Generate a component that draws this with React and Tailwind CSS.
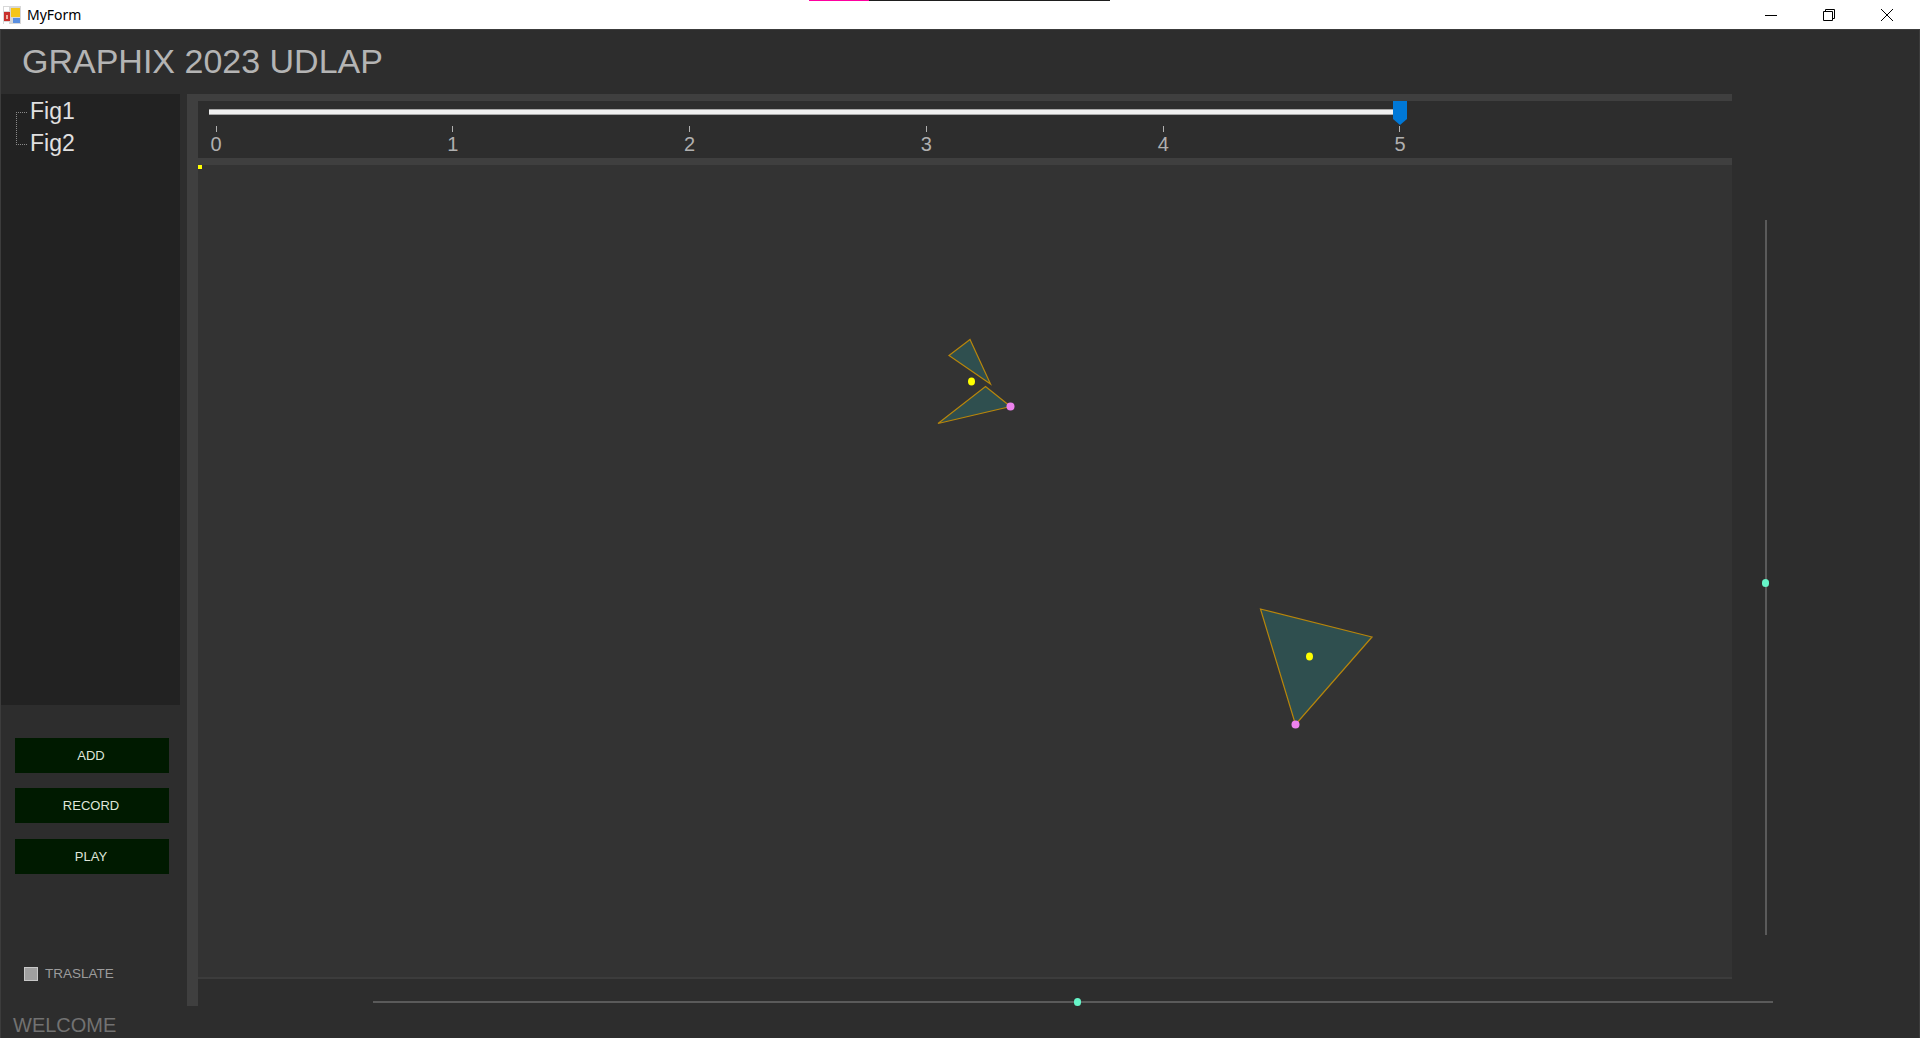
const TICKS = [0, 1, 2, 3, 4, 5];
const BUTTONS = [
  { label: "ADD", mt: "mt-[33px]" },
  { label: "RECORD", mt: "mt-[15px]" },
  { label: "PLAY", mt: "mt-[16px]" },
];
const FIGURES = [
  { points: "970,339.5 949,355.5 990.5,384", center: null, handle: null },
  { points: "985.5,386.5 1010.5,406.5 938,423.5", center: [971.5, 381.5], handle: [1010.5, 406.5] },
  { points: "1260.5,609 1372,637 1295.5,724.5", center: [1309.5, 656.5], handle: [1295.5, 724.5] },
];

function AppIcon() {
  return (
    <svg width="18" height="18" viewBox="0 0 18 18">
      <rect x="0" y="0" width="18" height="18" fill="#d8d8d8" />
      <rect x="1" y="6" width="6" height="9" fill="#c8302c" />
      <rect x="3" y="9" width="2" height="4" fill="#f0b0a0" />
      <rect x="8" y="2" width="9" height="9" fill="#f5c518" />
      <rect x="10" y="12" width="7" height="5" fill="#5a8fe0" />
      <rect x="1" y="1" width="5" height="4" fill="#ffffff" />
      <rect x="1" y="16" width="5" height="2" fill="#ffffff" />
    </svg>
  );
}

function WindowControls() {
  return (
    <div className="ml-auto flex items-center mr-[4px]">
      <div className="w-[58px] h-[29px] flex items-center justify-center">
        <svg width="12" height="12" viewBox="0 0 12 12">
          <path d="M0 6.5H12" stroke="#000" strokeWidth="1" />
        </svg>
      </div>
      <div className="w-[58px] h-[29px] flex items-center justify-center">
        <svg width="12" height="12" viewBox="0 0 12 12">
          <path d="M0.5 2.5H9.5V11.5H0.5Z M2.5 2.5V0.5H11.5V9.5H9.5" stroke="#000" fill="none" strokeWidth="1" />
        </svg>
      </div>
      <div className="w-[58px] h-[29px] flex items-center justify-center">
        <svg width="12" height="12" viewBox="0 0 12 12">
          <path d="M0 0L12 12M12 0L0 12" stroke="#000" fill="none" strokeWidth="1" />
        </svg>
      </div>
    </div>
  );
}

function Tree() {
  return (
    <div className="relative w-[179px] h-[611px] bg-[#222222] pt-[1px] pl-[29px] text-[23px] text-[#e0e0e0]">
      <div className="absolute left-[15px] top-[18px] w-[11px] h-[33px] border-l border-t border-b border-dotted border-[#8a8a8a]" />
      <div className="h-[32px] leading-[32px]">Fig1</div>
      <div className="h-[32px] leading-[32px]">Fig2</div>
    </div>
  );
}

function Sidebar() {
  return (
    <div className="w-[186px] flex flex-col">
      <Tree />
      {BUTTONS.map((b) => (
        <button
          key={b.label}
          className={`${b.mt} ml-[14px] w-[154px] h-[35px] bg-[#001a00] pr-[2px] text-[13px] text-[#dfe6da] flex items-center justify-center`}
        >
          {b.label}
        </button>
      ))}
      <div className="mt-[93px] ml-[23px] flex items-center gap-[7px]">
        <div className="w-[14px] h-[14px] bg-[#a0a0a0] border border-[#c8c8c8]" />
        <span className="text-[13.5px] leading-[14px] text-[#9c9c9c]">TRASLATE</span>
      </div>
      <div className="mt-[32px] ml-[12px] text-[20px] leading-[24px] text-[#727272]">WELCOME</div>
    </div>
  );
}

function TimeSlider() {
  return (
    <div className="ml-[2px] h-[57px] pl-[9px]">
      <div className="w-[1198px]">
        <div className="flex items-start h-[24px]">
          <div className="flex-1 h-[6px] mt-[8px] bg-[#f0f0f0] border-y border-[#a8a8a8]" />
          <svg width="14" height="24" viewBox="0 0 14 24">
            <path d="M0 0H14V18L7 24L0 18Z" fill="#0078d7" />
          </svg>
        </div>
        <div className="mt-[1px] flex justify-between">
          {TICKS.map((t) => (
            <div key={t} className="w-[14px] flex flex-col items-center">
              <div className="w-px h-[6px] bg-[#b0b0b0]" />
              <span className="mt-[1px] text-[20px] leading-[22px] text-[#b0b0b0]">{t}</span>
            </div>
          ))}
        </div>
      </div>
    </div>
  );
}

function Canvas() {
  return (
    <div className="h-[812px] bg-[#333333]">
      <svg className="block w-full h-full" viewBox="198 165 1534 812">
        <rect x="198" y="165" width="4" height="4" fill="#ffff00" />
        {FIGURES.map((f) => (
          <g key={f.points}>
            <polygon points={f.points} fill="#2f4f4f" stroke="#b8860b" strokeWidth="1.2" />
            {f.center && <ellipse cx={f.center[0]} cy={f.center[1]} rx="3.5" ry="4" fill="#ffff00" />}
            {f.handle && <circle cx={f.handle[0]} cy={f.handle[1]} r="4" fill="#ee82ee" />}
          </g>
        ))}
      </svg>
    </div>
  );
}

export default function App() {
  return (
    <div className="w-[1920px] h-[1038px] flex flex-col overflow-hidden font-['Liberation_Sans',Arial,sans-serif]">
      <div className="relative h-[29px] bg-white flex items-center pl-[3px] shrink-0">
        <div className="absolute top-0 left-[809px] w-[60px] h-px bg-[#ff00a0]" />
        <div className="absolute top-0 left-[869px] w-[241px] h-px bg-[#1e1e1e]" />
        <AppIcon />
        <span className="ml-[6px] text-[14px] text-black font-['Noto_Sans',sans-serif]">MyForm</span>
        <WindowControls />
      </div>
      <div className="flex-1 flex flex-col bg-[#2d2d2d] border-t border-x border-[#3c3c3c]">
        <div className="h-[64px] flex items-center pl-[21px] pb-[3px] text-[34px] leading-[38px] text-[#b4b4b4]">
          GRAPHIX 2023 UDLAP
        </div>
        <div className="flex">
          <Sidebar />
          <div className="w-[11px] h-[912px] bg-[#3f3f3f]" />
          <div className="flex-1 flex flex-col">
            <div className="flex">
              <div className="w-[1534px] flex flex-col">
                <div className="h-[7px] bg-[#3f3f3f]" />
                <TimeSlider />
                <div className="h-[7px] bg-[#3f3f3f]" />
                <Canvas />
                <div className="h-[2px] bg-[#3c3c3c]" />
              </div>
              <div className="relative ml-[33px] mt-[126px] w-[2px] h-[715px] bg-[#5a5a5a]">
                <div className="absolute left-[-3px] top-[359px] w-[7px] h-[8px] rounded-full bg-[#66f5c8]" />
              </div>
            </div>
            <div className="relative mt-[22px] ml-[175px] w-[1400px] h-[2px] bg-[#5a5a5a]">
              <div className="absolute left-[701px] top-[-3px] w-[7px] h-[8px] rounded-full bg-[#66f5c8]" />
            </div>
          </div>
        </div>
      </div>
    </div>
  );
}
